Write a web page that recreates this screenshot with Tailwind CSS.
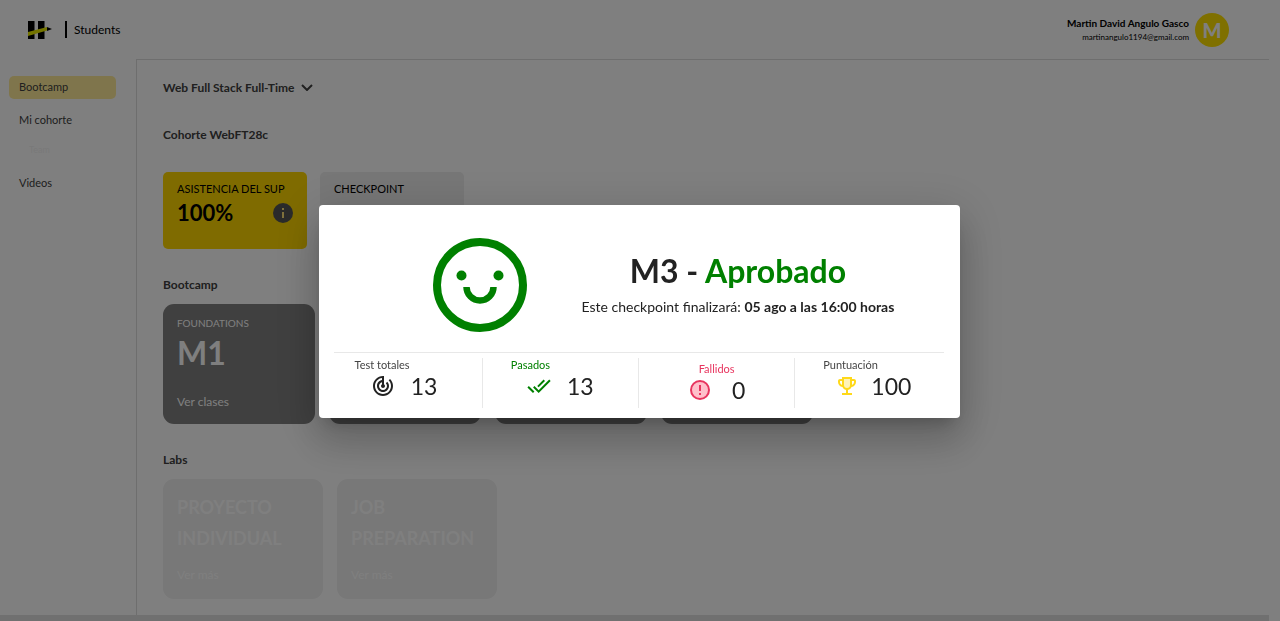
<!DOCTYPE html>
<html lang="es">
<head>
<meta charset="utf-8">
<meta name="viewport" content="width=device-width, initial-scale=1">
<title>Students</title>
<script src="https://cdn.jsdelivr.net/npm/@tailwindcss/browser@4"></script>
</head>
<body class="min-h-screen overflow-hidden bg-white font-['Lato',sans-serif] text-[#404040]">
<div class="flex min-h-screen flex-col pr-[11px]">
  <header class="flex h-[59px] items-center justify-between pr-10 pl-7">
    <a href="#" class="flex items-center text-black">
      <svg class="h-[18px] w-6" viewBox="0 0 24 18" aria-label="Henry">
        <path fill="#000" d="M0 0h6.500v18H0zM10 0h6.500v18H10z"/>
        <path fill="#e8e800" d="M0 11L19 6v3.500L0 15z"/>
        <path fill="#000" d="M19 6l5 2-5 2z"/>
      </svg>
      <span class="ml-[13px] h-[17px] w-[2px] bg-black"></span>
      <span class="ml-[7px] text-[12px] leading-4">Students</span>
    </a>
    <div class="flex items-center gap-[6px] text-black">
      <div class="text-right">
        <p class="text-[10px] leading-[14px] font-bold">Martin David Angulo Gasco</p>
        <p class="text-[8px] leading-[14px]">martinangulo1194@gmail.com</p>
      </div>
      <button class="flex size-[34px] items-center justify-center rounded-full bg-[#ffe000] text-[20px] font-black text-white">M</button>
    </div>
  </header>
  <div class="flex grow">
    <nav class="flex w-[136px] shrink-0 flex-col px-[9px] pt-[17px] text-[11px] leading-[22px]">
      <a href="#" class="mr-[11px] rounded-[5px] bg-[#ffeb99] pb-px pl-[10px]">Bootcamp</a>
      <a href="#" class="mt-[10px] pl-[10px]">Mi cohorte</a>
      <a href="#" class="mt-2 pl-5 text-[9px] text-[#f2f2f2]">Team</a>
      <a href="#" class="mt-[11px] pl-[10px]">Videos</a>
    </nav>
    <main class="grow border-t border-l border-[#dddddd] pt-5 pb-4 pl-[26px]">
      <button class="flex items-center gap-[6px] text-[12px] leading-[15px] font-bold">Web Full Stack Full-Time
        <svg class="h-[7px] w-3" viewBox="0 0 12 7" fill="none" stroke="currentColor" stroke-width="2"><path d="M1 1l5 5 5-5"/></svg>
      </button>
      <h1 class="mt-8 text-[12px] leading-4 font-bold">Cohorte WebFT28c</h1>
      <section class="mt-[29px] flex gap-[13px] text-black">
        <div class="h-[77px] w-36 rounded-[5px] bg-[#ffd700] px-[14px] pt-[10px]">
          <h2 class="text-[11px] leading-[14px]">ASISTENCIA DEL SUP</h2>
          <div class="mt-[5px] flex items-center justify-between">
            <p class="text-[22px] leading-6 font-bold">100%</p>
            <svg class="size-5" viewBox="0 0 20 20"><circle cx="10" cy="10" r="10" fill="#555"/><path fill="#ffe27a" d="M9 5h2v2H9zM9 9h2v6H9z"/></svg>
          </div>
        </div>
        <div class="h-[77px] w-36 rounded-[5px] bg-[#eeeeee] px-[14px] pt-[10px]">
          <h2 class="text-[11px] leading-[14px]">CHECKPOINT</h2>
        </div>
      </section>
      <h2 class="mt-7 text-[12px] leading-4 font-bold">Bootcamp</h2>
      <section class="mt-[11px] flex gap-[14px] text-white">
        <article class="flex h-30 w-[152px] flex-col items-start rounded-[11px] bg-[#808080] px-[14px] pt-3 pb-[14px]">
          <p class="text-[10px] leading-[14px]">FOUNDATIONS</p>
          <h3 class="mt-[3px] text-[32px] leading-10 font-bold">M1</h3>
          <button class="mt-auto text-[12px] leading-4">Ver clases</button>
        </article>
        <article class="h-30 w-[152px] rounded-[11px] bg-[#808080]"></article>
        <article class="h-30 w-[152px] rounded-[11px] bg-[#808080]"></article>
        <article class="h-30 w-[152px] rounded-[11px] bg-[#808080]"></article>
      </section>
      <h2 class="mt-7 text-[12px] leading-4 font-bold">Labs</h2>
      <section class="mt-[11px] flex gap-[14px] text-white">
        <article class="flex h-30 w-40 flex-col items-start rounded-[11px] bg-[#f0f0f0] px-[14px] pt-[13px] pb-4">
          <h3 class="text-[18px] leading-[31px] font-bold">PROYECTO<br>INDIVIDUAL</h3>
          <button class="mt-auto text-[12px] leading-4">Ver más</button>
        </article>
        <article class="flex h-30 w-40 flex-col items-start rounded-[11px] bg-[#f0f0f0] px-[14px] pt-[13px] pb-4">
          <h3 class="text-[18px] leading-[31px] font-bold">JOB<br>PREPARATION</h3>
          <button class="mt-auto text-[12px] leading-4">Ver más</button>
        </article>
      </section>
    </main>
  </div>
  <div class="h-[6px] shrink-0 bg-[#e0e0e0]"></div>
</div>

<div class="fixed inset-0 flex items-center justify-center bg-black/50 pt-[2px] pr-[2px]">
  <div role="dialog" aria-modal="true" aria-labelledby="result" class="w-[641px] rounded-[4px] bg-white px-4 pt-[33px] pb-[10px] text-[#222222] shadow-[0_11px_15px_-7px_rgba(0,0,0,0.2),0_24px_38px_3px_rgba(0,0,0,0.14),0_9px_46px_8px_rgba(0,0,0,0.12)]">
    <div class="flex items-center gap-[55px] pb-5 pl-[98px]">
      <svg class="size-[94px] shrink-0" viewBox="0 0 94 94" fill="none" stroke="#008000">
        <circle cx="47" cy="47" r="43" stroke-width="8"/>
        <path stroke-width="6.500" d="M33.500 49a13.500 13.500 0 0 0 27 0"/>
        <g fill="#008000" stroke="none"><circle cx="28.500" cy="37.500" r="5"/><circle cx="65.500" cy="37.500" r="5"/></g>
      </svg>
      <div class="text-center whitespace-nowrap">
        <h2 id="result" class="text-[32px] leading-10 font-bold">M3 - <span class="text-[#008000]">Aprobado</span></h2>
        <p class="mt-1 text-[14px] leading-6">Este checkpoint finalizará: <strong class="font-bold">05 ago a las 16:00 horas</strong></p>
      </div>
    </div>
    <div class="-mx-2 grid grid-cols-4 divide-x divide-[#e8e8e8] pt-[6px] [background:linear-gradient(#e8e8e8,#e8e8e8)_center_top/610px_1px_no-repeat]">
      <div class="h-[50px]">
        <p class="pl-7 text-[11px] leading-[14px] text-[#444444]">Test totales</p>
        <div class="flex items-center justify-center gap-4">
          <svg class="size-6" viewBox="0 0 24 24" fill="currentColor"><path d="m19.070 4.930-1.410 1.410C19.100 7.790 20 9.790 20 12c0 4.420-3.580 8-8 8s-8-3.580-8-8c0-4.080 3.050-7.440 7-7.930v2.020C8.160 6.570 6 9.030 6 12c0 3.310 2.690 6 6 6s6-2.690 6-6c0-1.660-.67-3.160-1.760-4.240l-1.410 1.410C15.550 9.900 16 10.900 16 12c0 2.210-1.790 4-4 4s-4-1.790-4-4c0-1.860 1.280-3.410 3-3.860v2.140c-.6.350-1 .98-1 1.720 0 1.100.9 2 2 2s2-.9 2-2c0-.74-.4-1.380-1-1.720V2h-1C6.480 2 2 6.480 2 12s4.480 10 10 10 10-4.480 10-10c0-2.760-1.120-5.260-2.930-7.070z"/></svg>
          <span class="text-[23px] leading-7">13</span>
        </div>
      </div>
      <div class="h-[50px]">
        <p class="pl-7 text-[11px] leading-[14px] text-[#008000]">Pasados</p>
        <div class="flex items-center justify-center gap-4">
          <svg class="size-6" viewBox="0 0 24 24" fill="#008000"><path d="m18 7-1.410-1.410-6.340 6.340 1.410 1.410L18 7zm4.240-1.410L11.660 16.170 7.480 12l-1.410 1.410L11.660 19l12-12-1.420-1.410zM.41 13.410 6 19l1.410-1.410L1.830 12 .41 13.410z"/></svg>
          <span class="text-[23px] leading-7">13</span>
        </div>
      </div>
      <div class="flex h-[50px] flex-col justify-center">
        <p class="text-center text-[11px] leading-[14px] text-[#e8355f]">Fallidos</p>
        <div class="flex items-center justify-center gap-5">
          <svg class="size-6" viewBox="0 0 24 24"><circle cx="12" cy="12" r="9" fill="#ffc0cb" stroke="#e8355f" stroke-width="2"/><path fill="#e8355f" d="M11 7h2v6h-2zM11 15h2v2h-2z"/></svg>
          <span class="text-[23px] leading-7">0</span>
        </div>
      </div>
      <div class="h-[50px]">
        <p class="pl-7 text-[11px] leading-[14px] text-[#444444]">Puntuación</p>
        <div class="flex items-center justify-center gap-3">
          <svg class="size-6" viewBox="0 0 24 24"><path fill="#ffd91a" d="M19 5h-2V3H7v2H5c-1.100 0-2 .9-2 2v1c0 2.550 1.920 4.630 4.390 4.940A5.010 5.010 0 0 0 11 15.900V19H7v2h10v-2h-4v-3.100a5.010 5.010 0 0 0 3.610-2.960C19.080 12.630 21 10.550 21 8V7c0-1.100-.9-2-2-2zM5 8V7h2v3.820C5.840 10.400 5 9.300 5 8zm14 0c0 1.300-.84 2.400-2 2.820V7h2v1z" fill-rule="evenodd"/><path fill="#fff3b8" d="M9 5h6v6a3 3 0 0 1-6 0z"/></svg>
          <span class="text-[23px] leading-7">100</span>
        </div>
      </div>
    </div>
  </div>
</div>
</body>
</html>
